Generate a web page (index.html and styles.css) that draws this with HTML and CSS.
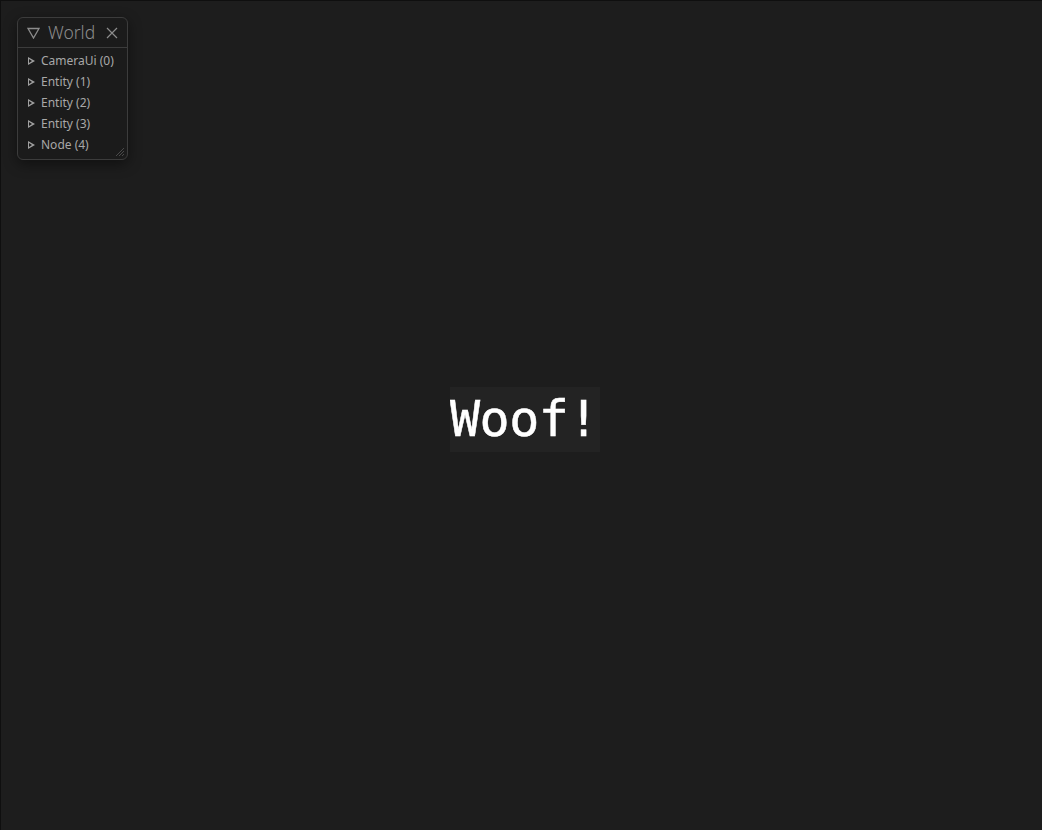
FILE: index.html
```html
<!DOCTYPE html>
<html>
<head>
<meta charset="utf-8">
<link rel="stylesheet" href="styles.css">
</head>
<body>
<div class="stage">
  <div class="window">
    <div class="titlebar">
      <svg class="collapse" width="13" height="12" viewBox="0 0 13 12"><path d="M1 1.5 H12 L6.5 11 Z" fill="none" stroke="#8c8c8c" stroke-width="1.3" stroke-linejoin="miter"/></svg>
      <span class="title">World</span>
      <svg class="close" width="12" height="12" viewBox="0 0 12 12"><path d="M1 1 L11 11 M11 1 L1 11" stroke="#8c8c8c" stroke-width="1.2"/></svg>
    </div>
    <ul class="tree">
      <li class="node"><span class="arrow"></span>CameraUi (0)</li>
      <li class="node"><span class="arrow"></span>Entity (1)</li>
      <li class="node"><span class="arrow"></span>Entity (2)</li>
      <li class="node"><span class="arrow"></span>Entity (3)</li>
      <li class="node"><span class="arrow"></span>Node (4)</li>
    </ul>
    <svg class="grip" width="10" height="10" viewBox="0 0 10 10"><path d="M9 1 L1 9 M9 4 L4 9 M9 7 L7 9" stroke="#4a4a4a" stroke-width="1"/></svg>
  </div>
  <div class="label">Woof!</div>
</div>
</body>
</html>
```
FILE: styles.css
```css
html, body {
  margin: 0;
  padding: 0;
  height: 100%;
  background: #1d1d1d;
}
.stage {
  box-sizing: border-box;
  height: 830px;
  border-left: 1px solid #0f0f0f;
  border-top: 1px solid #0f0f0f;
  display: flex;
  align-items: center;
  justify-content: center;
  position: relative;
  font-family: "Noto Sans", "Open Sans", sans-serif;
}
.window {
  position: absolute;
  left: 16px;
  top: 16px;
  width: 109px;
  height: 141px;
  background: #1b1b1b;
  border: 1px solid #3c3c3c;
  border-radius: 6px;
  box-shadow: 0 4px 14px rgba(0,0,0,0.45);
}
.titlebar {
  height: 29px;
  border-bottom: 1px solid #3c3c3c;
  display: flex;
  align-items: center;
  padding-left: 9px;
  padding-right: 9px;
}
.collapse {
  margin-right: 8px;
  margin-top: 1px;
}
.title {
  flex: 1;
  color: #8c8c8c;
  font-size: 17.5px;
  font-weight: 300;
  line-height: 20px;
  margin-top: -1px;
}
.close {
  margin-top: 1px;
}
.tree {
  list-style: none;
  margin: 0;
  padding: 2px 0 0 10px;
}
.node {
  height: 21px;
  display: flex;
  align-items: center;
  color: #a8a8a8;
  font-size: 12px;
}
.arrow {
  width: 0;
  height: 0;
  border-top: 4px solid transparent;
  border-bottom: 4px solid transparent;
  border-left: 7px solid #a0a0a0;
  margin-right: 6px;
  position: relative;
}
.arrow::after {
  content: "";
  position: absolute;
  left: -6px;
  top: -2px;
  width: 0;
  height: 0;
  border-top: 2px solid transparent;
  border-bottom: 2px solid transparent;
  border-left: 3px solid #1b1b1b;
}
.grip {
  position: absolute;
  right: 2px;
  bottom: 2px;
}
.label {
  box-sizing: border-box;
  width: 150px;
  background: #232323;
  color: #ffffff;
  font-family: "DejaVu Sans Mono", monospace;
  font-size: 50px;
  letter-spacing: -0.5px;
  line-height: 65px;
  height: 65px;
  padding: 0 0 0 0;
  margin-top: 7px;
  margin-left: 7px;
  white-space: nowrap;
  overflow: hidden;
  -webkit-text-stroke: 0.5px #ffffff;
}
```
